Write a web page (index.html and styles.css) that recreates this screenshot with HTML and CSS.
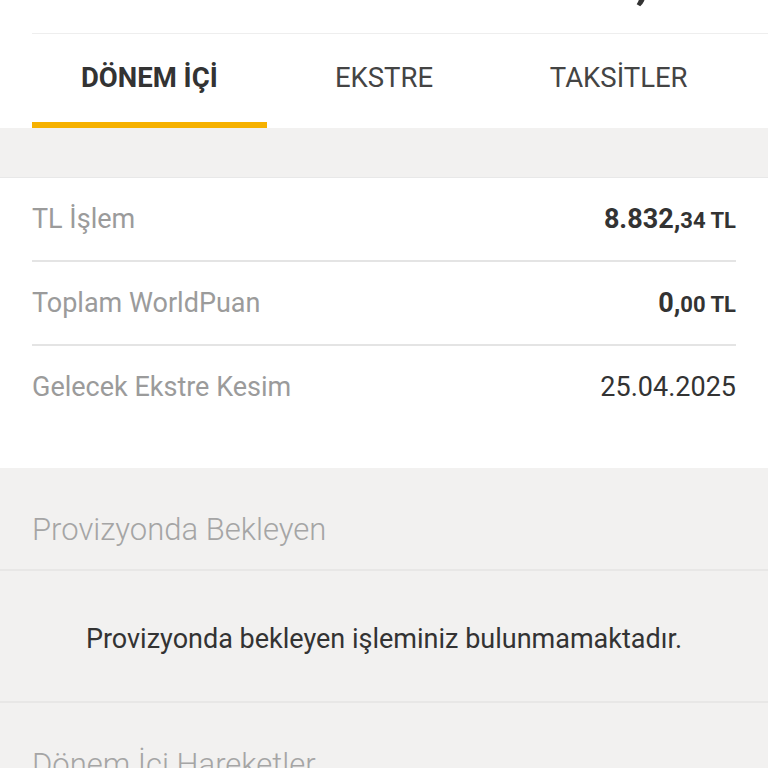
FILE: index.html
```html
<!DOCTYPE html>
<html lang="tr">
  <head>
    <meta charset="UTF-8" />
    <meta name="viewport" content="width=device-width, initial-scale=1.0" />
    <title>Kart Detayı</title>
    <link rel="stylesheet" href="styles.css">
  </head>
  <body>
    <div class="page">
      <div class="balance">
        <span class="balance-amount">8.832,34</span>
      </div>

      <div class="tabs">
        <div class="tab active">DÖNEM İÇİ</div>
        <div class="tab">EKSTRE</div>
        <div class="tab">TAKSİTLER</div>
      </div>

      <div class="spacer"></div>

      <div class="summary">
        <div class="row">
          <span class="label">TL İşlem</span>
          <span class="value strong">8.832,<small>34 TL</small></span>
        </div>
        <div class="row">
          <span class="label">Toplam WorldPuan</span>
          <span class="value strong">0,<small>00 TL</small></span>
        </div>
        <div class="row">
          <span class="label">Gelecek Ekstre Kesim</span>
          <span class="value">25.04.2025</span>
        </div>
      </div>

      <div class="section">
        <div class="section-title">Provizyonda Bekleyen</div>
        <div class="empty">Provizyonda bekleyen işleminiz bulunmamaktadır.</div>
      </div>

      <div class="section">
        <div class="section-title">Dönem İçi Hareketler</div>
      </div>
    </div>
  </body>
</html>
```

FILE: styles.css
```css
body {
  margin: 0;
  font-family: Roboto, 'Noto Sans', sans-serif;
  background: #f2f1f0;
  color: #333;
}
.page {
  width: 768px;
  overflow: hidden;
}
.balance {
  background: white;
  height: 33px;
  overflow: hidden;
  display: flex;
  justify-content: flex-end;
  padding-right: 56px;
}
.balance-amount {
  font-size: 56px;
  font-weight: 500;
  line-height: 56px;
  margin-top: -50px;
  color: #333;
}
.tabs {
  background: white;
  display: flex;
  padding: 0 32px;
  border-top: 1px solid #eee;
  position: relative;
}
.tabs::before {
  content: '';
  position: absolute;
  left: 0;
  top: -1px;
  width: 32px;
  height: 1px;
  background: white;
}
.tab {
  flex: 1;
  height: 94px;
  display: flex;
  align-items: center;
  justify-content: center;
  font-size: 27.5px;
  color: #444;
  box-sizing: border-box;
  padding-bottom: 8px;
}
.tab.active {
  font-weight: 700;
  color: #333;
  border-bottom: 6px solid #f6b100;
  padding-bottom: 2px;
}
.spacer {
  height: 49px;
  border-bottom: 1px solid #e8e8e8;
}
.summary {
  background: white;
  padding: 0 32px 40px;
}
.row {
  height: 82px;
  display: flex;
  align-items: center;
  justify-content: space-between;
  border-bottom: 2px solid #e4e4e4;
  font-size: 27px;
}
.row:last-child {
  border-bottom: 0;
}
.label {
  color: #9b9b9b;
}
.value {
  color: #333;
}
.value.strong {
  font-weight: 700;
}
.value small {
  font-size: 22px;
}
.section-title {
  height: 103px;
  display: flex;
  align-items: center;
  padding: 22px 32px 0;
  box-sizing: border-box;
  font-size: 31px;
  font-weight: 300;
  color: #a5a5a5;
  border-bottom: 2px solid #e8e7e6;
}
.empty {
  height: 132px;
  padding-top: 6px;
  box-sizing: border-box;
  display: flex;
  align-items: center;
  justify-content: center;
  font-size: 27px;
  color: #333;
  border-bottom: 2px solid #e8e7e6;
}
```
